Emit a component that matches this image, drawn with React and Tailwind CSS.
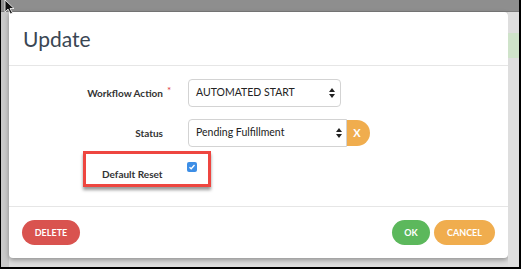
// App.jsx — "Update" workflow modal over a greyed-out page.

function UpDownArrows() {
  return (
    <svg width="6" height="10" viewBox="0 0 6 10" className="shrink-0">
      <path d="M3 0 L6 4 L0 4 Z" fill="#222" />
      <path d="M3 10 L6 6 L0 6 Z" fill="#222" />
    </svg>
  )
}

function Cursor() {
  return (
    <svg width="11" height="15" viewBox="0 0 11 15" className="absolute left-[3px] top-0">
      <path d="M1 0 L1 12 L4 9 L6.5 14 L8.5 13 L6 8.5 L10 8.5 Z" fill="#111" stroke="#fff" strokeWidth="0.8" />
    </svg>
  )
}

export default function App() {
  return (
    <div className="relative flex h-[269px] w-[521px] flex-col overflow-hidden border-b-2 border-l border-r-2 border-black bg-[#dcdcdc] font-['Lato','Open_Sans',sans-serif]">
      <Cursor />

      {/* Top strip of the page behind the overlay */}
      <div className="h-[12px] shrink-0 border-b border-[#7a7a7a] bg-[#8e8e8e]" />

      <div className="flex flex-1">
        <div className="w-[8px] shrink-0 bg-[#c9c9c9]" />

        {/* Modal */}
        <div className="flex h-[246px] w-[499px] shrink-0 flex-col rounded-b-[4px] rounded-tr-[4px] bg-white shadow-[0_2px_5px_rgba(0,0,0,0.35)]">
          <div className="flex h-[54px] items-center border-b border-[#e6e6e6] px-[14px]">
            <h2 className="text-[21px] leading-none text-[#3a4653]">Update</h2>
          </div>

          <div className="flex flex-1 flex-col pt-[13px]">
            {/* Workflow Action */}
            <div className="flex h-[28px] items-center">
              <label className="w-[154px] text-right text-[10px] font-bold text-[#333]">Workflow Action</label>
              <span className="w-[25px] self-start pl-[4px] pt-[6px] text-[10px] leading-none text-[#e0393e]">*</span>
              <div className="flex h-[28px] w-[153px] items-center justify-between rounded-[4px] border border-[#d3d3d3] pl-[7px] pr-[5px] text-[10.5px] text-[#222]">
                <span>AUTOMATED START</span>
                <UpDownArrows />
              </div>
            </div>

            {/* Status */}
            <div className="mt-[12px] flex h-[28px] items-center">
              <label className="w-[154px] text-right text-[10px] font-bold text-[#333]">Status</label>
              <span className="w-[25px]" />
              <div className="flex h-[28px] w-[159px] items-center justify-between rounded-l-[4px] border border-[#d3d3d3] pl-[7px] pr-[4px] text-[10.5px] text-[#222]">
                <span>Pending Fulfillment</span>
                <UpDownArrows />
              </div>
              <button className="flex h-[26px] w-[23px] items-center justify-center rounded-r-full bg-[#f0ad4e] pr-[3px] text-[11px] font-bold text-white">
                X
              </button>
            </div>

            {/* Default Reset, highlighted */}
            <div className="ml-[74px] mt-[4px] flex h-[36px] w-[128px] items-start border-[3px] border-[#ee4640] shadow-[0_3px_3px_rgba(0,0,0,0.4)]">
              <span className="ml-[16px] mt-[13px] text-[10px] font-bold leading-[14px] text-[#333]">Default Reset</span>
              <span className="ml-[24px] mt-[8px] flex h-[10px] w-[10px] items-center justify-center rounded-[2px] bg-[#3d8ee6]">
                <svg width="8" height="8" viewBox="0 0 8 8">
                  <path d="M1.5 4.2 L3.2 5.8 L6.5 2" fill="none" stroke="#fff" strokeWidth="1.3" />
                </svg>
              </span>
            </div>
          </div>

          <div className="flex h-[52px] items-center justify-between border-t border-[#e6e6e6] px-[13px]">
            <button className="h-[25px] w-[58px] rounded-full bg-[#d9534f] text-[9px] font-bold text-white">DELETE</button>
            <div className="flex gap-[4px]">
              <button className="h-[25px] w-[38px] rounded-full bg-[#5cb85c] text-[9px] font-bold text-white">OK</button>
              <button className="h-[25px] w-[61px] rounded-full bg-[#f0ad4e] text-[9px] font-bold text-white">CANCEL</button>
            </div>
          </div>
        </div>

        {/* Page peeking out on the right */}
        <div className="flex-1 bg-[#dedede]">
          <div className="mt-[21px] h-[25px] bg-[#cfe3ca]" />
        </div>
      </div>
    </div>
  )
}
